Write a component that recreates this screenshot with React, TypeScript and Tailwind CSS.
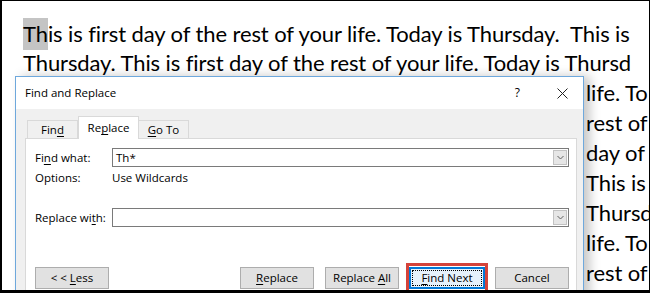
import React from "react";

const U = ({ children }: { children: React.ReactNode }) => (
  <span className="underline underline-offset-2 decoration-[1px]">{children}</span>
);

function Btn({ children, focused }: { children: React.ReactNode; focused?: boolean }) {
  if (focused) {
    return (
      <div className="w-[82px] h-[30px] border-[3px] border-[#d4433a] flex items-center justify-center -my-[4px]">
        <div className="w-[76px] h-[22px] border-2 border-[#0078d7] bg-[#e5f1fb] flex items-center justify-center p-[1px]">
          <div className="w-full h-full border border-dotted border-black flex items-center justify-center">
            <span>{children}</span>
          </div>
        </div>
      </div>
    );
  }
  return (
    <div className="w-[74px] h-[22px] border border-[#adadad] bg-[#e1e1e1] flex items-center justify-center">
      <span className="whitespace-pre">{children}</span>
    </div>
  );
}

function Combo({ value }: { value?: string }) {
  return (
    <div className="flex-1 h-[19px] border border-[#7a7a7a] bg-white flex items-center justify-between pl-[3px] pr-[1px]">
      <span>{value}</span>
      <div className="w-[14px] h-[15px] bg-[#e6e6e6] border border-[#c2c2c2] flex items-center justify-center">
        <svg width="7" height="5" viewBox="0 0 7 5">
          <path d="M0.5 1 L3.5 4 L6.5 1" fill="none" stroke="#606060" strokeWidth="1" />
        </svg>
      </div>
    </div>
  );
}

export default function App() {
  const doc = "font-['Lato','Open_Sans',sans-serif] text-[22px] tracking-[-0.1px] text-black";
  const right = ["life. To", "rest of", "day of", "This is", "Thursd", "life. To", "rest of"];
  return (
    <div className="relative w-[650px] h-[293px] overflow-hidden bg-white border-l-2 border-t border-r border-b-[3px] border-black">
      <div className={`${doc} pl-[21px] pt-[17px]`}>
        <div className="h-[30px] leading-[30px] whitespace-nowrap">
          <span className="bg-[#c4c4c4] inline-block leading-[32px]">Th</span>is is first day of the rest of your life. Today is Thursday.&nbsp; This is
        </div>
        <div className="h-[30px] leading-[30px] whitespace-nowrap">
          Thursday. This is first day of the rest of your life. Today is Thursd
        </div>
        {right.map((t, i) => (
          <div key={i} className="h-[30px] leading-[30px] whitespace-nowrap pl-[563px]">
            {t}
          </div>
        ))}
      </div>

      <div className="absolute left-[13px] top-[75px] w-[569px] h-[240px] border border-[#6ea8dc] bg-[#f0f0f0] shadow-[6px_0_10px_rgba(0,0,0,0.22)] font-['Open_Sans',sans-serif] text-[11.5px] text-black flex flex-col">
        <div className="h-[32px] bg-white flex items-center pl-[9px] pr-[15px]">
          <span className="flex-1">Find and Replace</span>
          <span className="text-[12px] mr-[37px]">?</span>
          <svg width="11" height="11" viewBox="0 0 11 11">
            <path d="M0.5 0.5 L10.5 10.5 M10.5 0.5 L0.5 10.5" stroke="#222" strokeWidth="1" />
          </svg>
        </div>
        <div className="flex-1 flex flex-col pl-[9px] pr-[6px] pt-[7px]">
          <div className="flex items-end h-[22px] pl-[2px]">
            <div className="w-[51px] h-[18px] border border-b-0 border-[#d9d9d9] bg-[#f0f0f0] flex items-center justify-center">
              <span>Fin<U>d</U></span>
            </div>
            <div className="w-[61px] h-[23px] -mb-[1px] border border-b-0 border-[#d9d9d9] bg-white flex items-center justify-center relative z-10">
              <span>Re<U>p</U>lace</span>
            </div>
            <div className="w-[50px] h-[18px] border border-b-0 border-l-0 border-[#d9d9d9] bg-[#f0f0f0] flex items-center justify-center">
              <span><U>G</U>o To</span>
            </div>
          </div>
          <div className="flex-1 border border-[#d9d9d9] bg-white pl-[9px] pr-[7px] pt-[9px] flex flex-col">
            <div className="flex items-center h-[19px]">
              <span className="w-[77px]">Fi<U>n</U>d what:</span>
              <Combo value="Th*" />
            </div>
            <div className="flex items-center h-[22px]">
              <span className="w-[77px]">Options:</span>
              <span>Use Wildcards</span>
            </div>
            <div className="flex items-center h-[19px] mt-[19px]">
              <span className="w-[77px]">Replace wi<U>t</U>h:</span>
              <Combo />
            </div>
            <div className="flex items-center mt-[40px]">
              <Btn>{"< < "}<U>L</U>ess</Btn>
              <div className="flex-1" />
              <div className="flex items-center gap-[11px]">
                <Btn><U>R</U>eplace</Btn>
                <Btn>{"Replace "}<U>A</U>ll</Btn>
                <div className="-mx-[4px]">
                  <Btn focused><U>F</U>ind Next</Btn>
                </div>
                <Btn>Cancel</Btn>
              </div>
            </div>
          </div>
        </div>
      </div>
    </div>
  );
}
